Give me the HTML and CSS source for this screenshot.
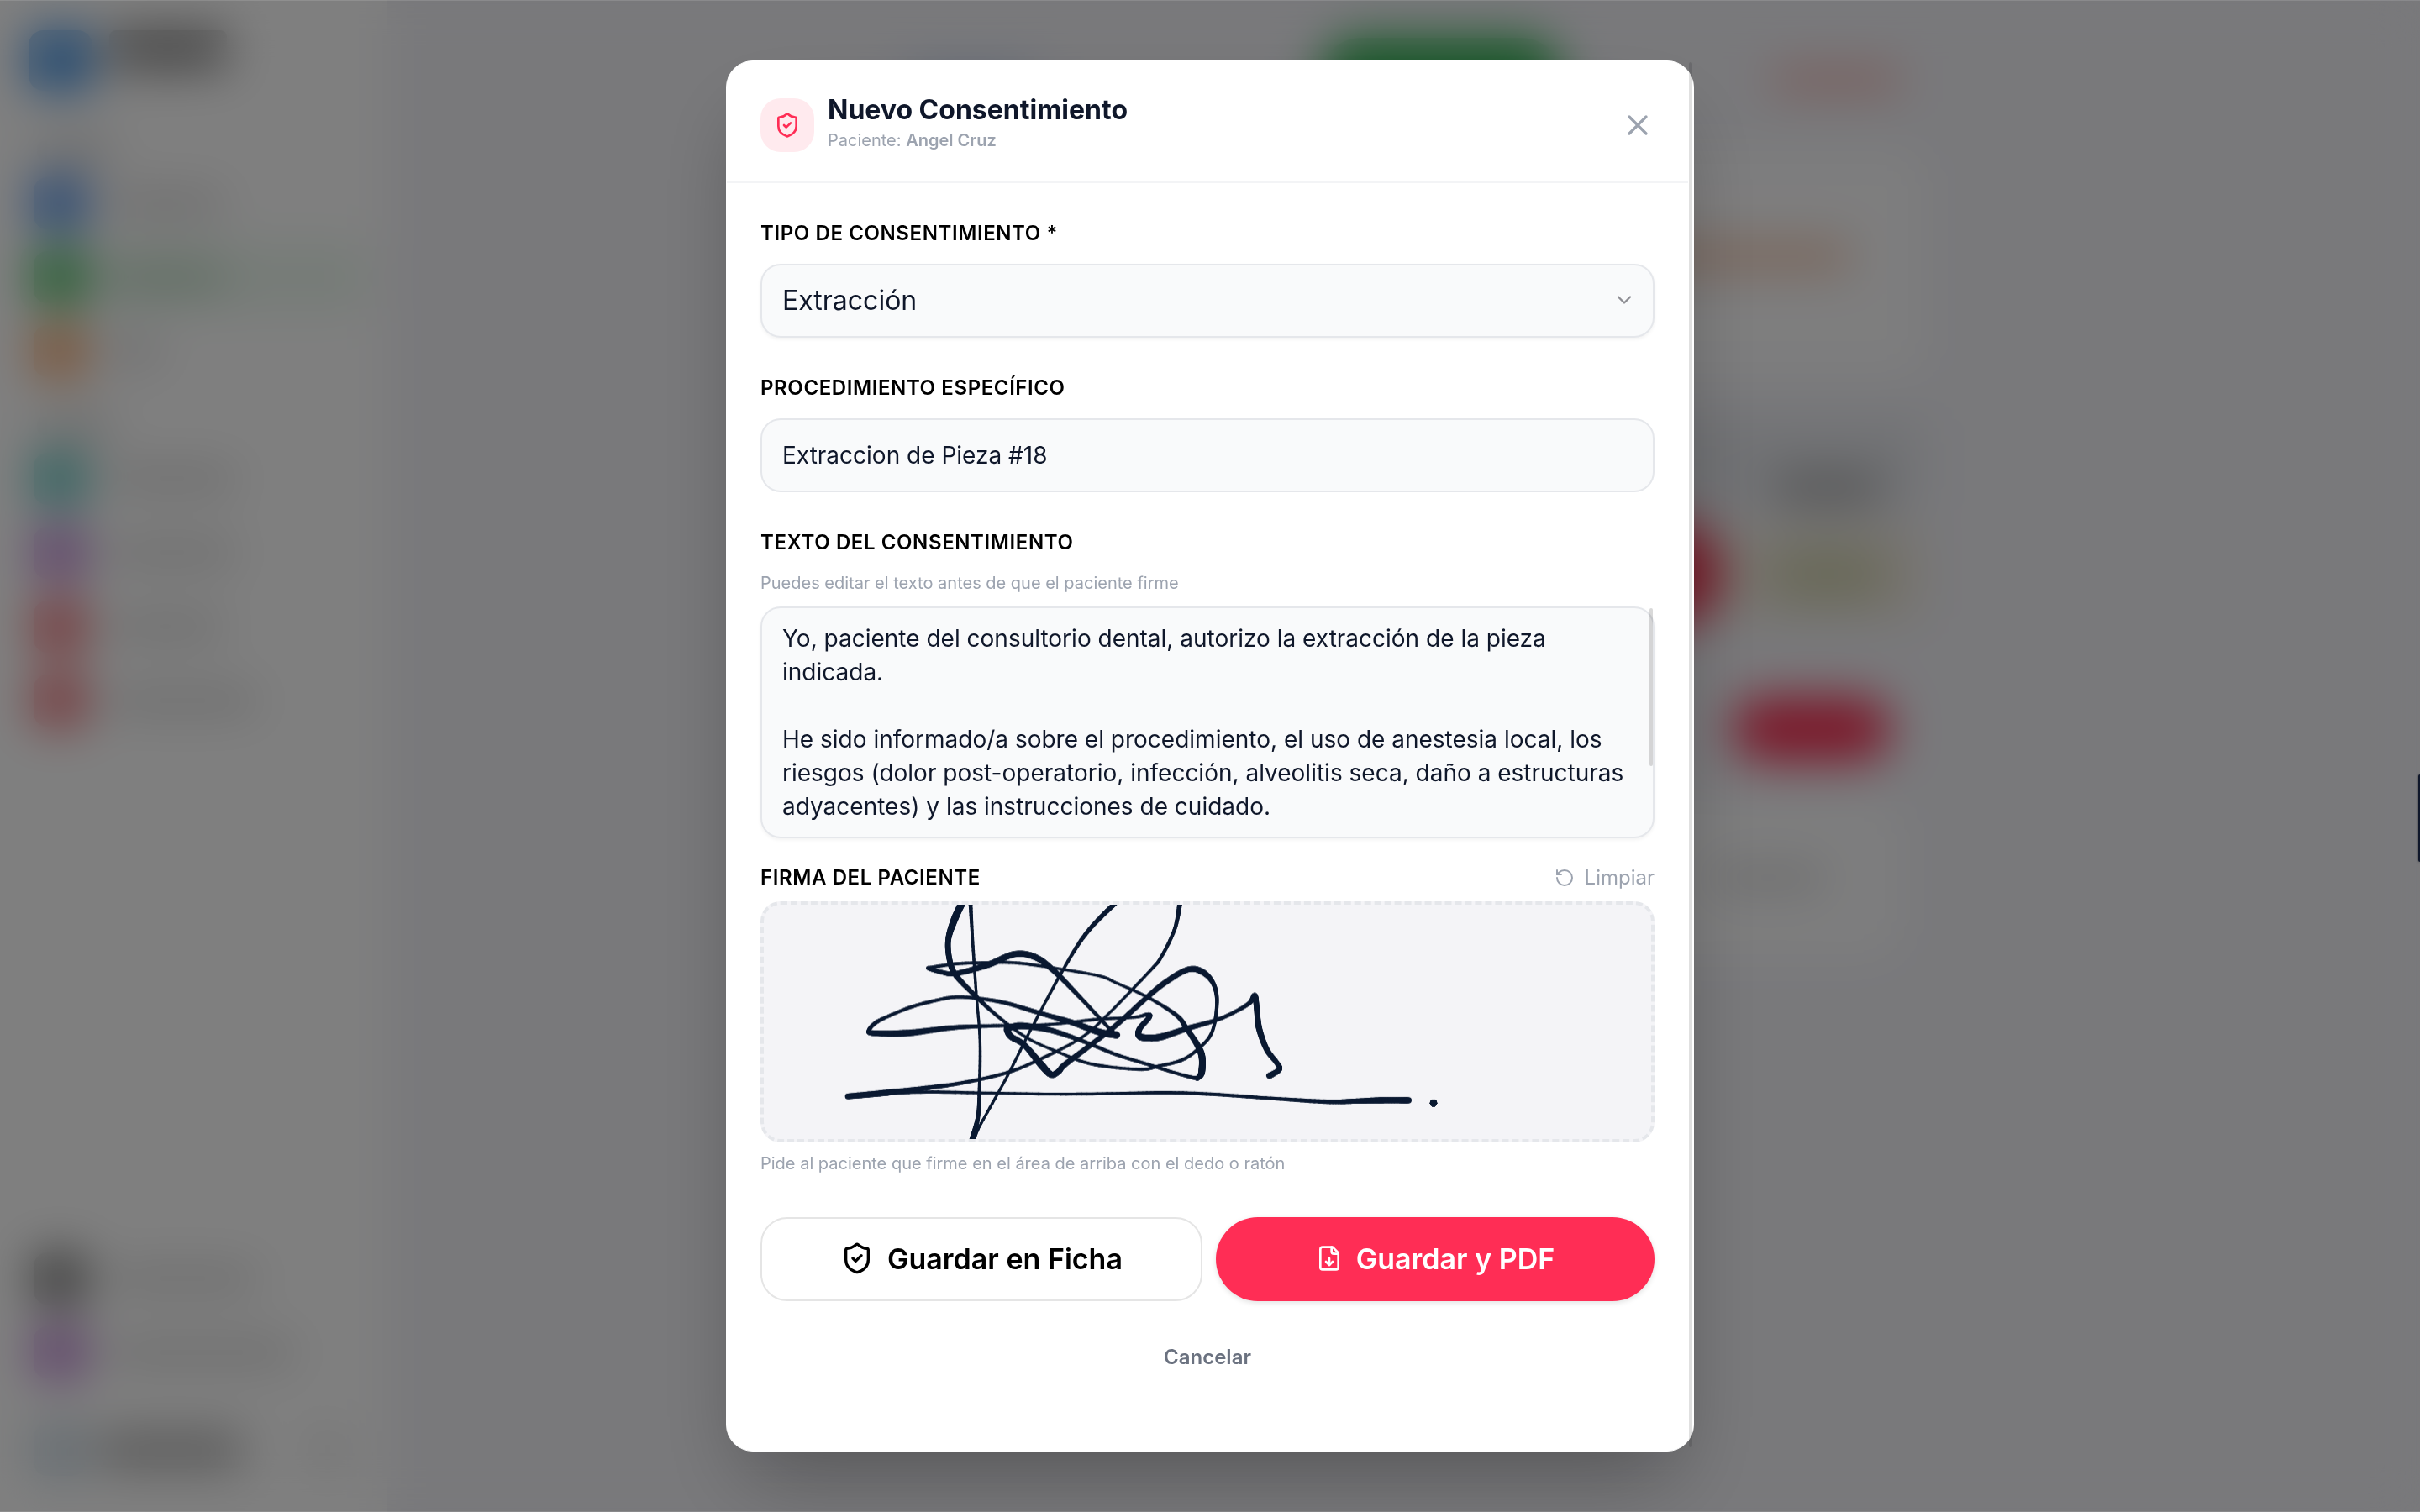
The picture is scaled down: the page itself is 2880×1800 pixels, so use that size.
FILE: index.html
```html
<!DOCTYPE html>
<html lang="es">
<head>
  <meta charset="UTF-8">
  <meta name="viewport" content="width=device-width, initial-scale=1">
  <title>Nuevo Consentimiento</title>
  <link rel="stylesheet" href="styles.css">
</head>
<body>

  <!-- App de fondo -->
  <div class="app" aria-hidden="true">
    <aside class="sidebar">
      <div class="brand"><i class="logo"></i><i class="bar brand-bar"></i></div>
      <i class="bar section-bar"></i>
      <div class="nav-item"><i class="dot blue"></i><i class="bar w-m"></i></div>
      <div class="nav-item active"><i class="dot green"></i><i class="bar w-m"></i></div>
      <div class="nav-item"><i class="dot orange"></i><i class="bar w-s"></i></div>
      <i class="bar section-bar second"></i>
      <div class="nav-item"><i class="dot teal"></i><i class="bar w-l"></i></div>
      <div class="nav-item"><i class="dot purple"></i><i class="bar w-l"></i></div>
      <div class="nav-item"><i class="dot red"></i><i class="bar w-m"></i></div>
      <div class="nav-item"><i class="dot red"></i><i class="bar w-xl"></i></div>
      <div class="sidebar-bottom">
        <div class="nav-item"><i class="dot dark"></i><i class="bar w-xl"></i></div>
        <div class="nav-item"><i class="dot purple"></i><i class="bar w-xxl"></i></div>
        <div class="user"><i class="dot avatar"></i><i class="bar user-bar"></i><i class="user-more"></i></div>
      </div>
    </aside>
    <main class="main">
      <div class="toolbar"><i class="tool-blue"></i><i class="tool-green"></i><i class="tool-red"></i></div>
      <div class="panel"><i class="alert-bar"></i></div>
      <div class="teeth gray"><i class="tooth-label"></i></div>
      <div class="teeth sand"><i class="fab"></i><i class="tooth-label khaki"></i></div>
      <div class="actions"><i class="pill"></i></div>
      <div class="panel low"><i class="bar w-m"></i></div>
    </main>
  </div>

  <div class="overlay">
    <div class="modal" role="dialog" aria-modal="true" aria-labelledby="modal-title">
      <header class="modal-header">
        <div class="header-icon">
          <svg class="icon icon-md" viewBox="0 0 24 24"><path d="M20 13c0 5-3.5 7.5-7.66 8.95a1 1 0 0 1-.67-.01C7.5 20.500 4 18 4 13V6a1 1 0 0 1 1-1c2 0 4.500-1.200 6.240-2.720a1.170 1.170 0 0 1 1.520 0C14.510 3.810 17 5 19 5a1 1 0 0 1 1 1z"/><path d="m9 12 2 2 4-4"/></svg>
        </div>
        <div class="header-text">
          <h1 id="modal-title">Nuevo Consentimiento</h1>
          <p>Paciente: <strong>Angel Cruz</strong></p>
        </div>
        <button type="button" class="close-btn" aria-label="Cerrar">
          <svg class="icon icon-lg" viewBox="0 0 24 24"><path d="M18 6 6 18M6 6l12 12"/></svg>
        </button>
      </header>

      <form class="modal-body">
        <div class="field">
          <label for="tipo">TIPO DE CONSENTIMIENTO *</label>
          <div class="select-wrap">
            <select id="tipo">
              <option>Extracción</option>
            </select>
            <svg class="icon chevron" viewBox="0 0 24 24"><path d="m6 9 6 6 6-6"/></svg>
          </div>
        </div>

        <div class="field">
          <label for="procedimiento">PROCEDIMIENTO ESPECÍFICO</label>
          <input id="procedimiento" type="text" value="Extraccion de Pieza #18">
        </div>

        <div class="field field-text">
          <label for="texto">TEXTO DEL CONSENTIMIENTO</label>
          <p class="hint">Puedes editar el texto antes de que el paciente firme</p>
          <div class="textarea-wrap">
            <textarea id="texto" rows="6">Yo, paciente del consultorio dental, autorizo la extracción de la pieza indicada.

He sido informado/a sobre el procedimiento, el uso de anestesia local, los riesgos (dolor post-operatorio, infección, alveolitis seca, daño a estructuras adyacentes) y las instrucciones de cuidado.</textarea>
            <span class="text-scroll"></span>
          </div>
        </div>

        <div class="sign-head">
          <span class="sign-label">FIRMA DEL PACIENTE</span>
          <button type="button" class="clear-btn" id="limpiar">
            <svg class="icon icon-sm" viewBox="0 0 24 24"><path d="M3 12a9 9 0 1 0 9-9 9.750 9.750 0 0 0-6.740 2.740L3 8"/><path d="M3 3v5h5"/></svg>
            Limpiar
          </button>
        </div>
        <div class="sign-box">
          <canvas id="firma" width="1056" height="278" aria-label="Firma del paciente"></canvas>
        </div>
        <p class="hint sign-hint">Pide al paciente que firme en el área de arriba con el dedo o ratón</p>

        <div class="buttons">
          <button type="button" class="btn btn-outline">
            <svg class="icon icon-lg" viewBox="0 0 24 24"><path d="M20 13c0 5-3.5 7.5-7.66 8.95a1 1 0 0 1-.67-.01C7.5 20.500 4 18 4 13V6a1 1 0 0 1 1-1c2 0 4.500-1.200 6.240-2.720a1.170 1.170 0 0 1 1.520 0C14.510 3.810 17 5 19 5a1 1 0 0 1 1 1z"/><path d="m9 12 2 2 4-4"/></svg>
            Guardar en Ficha
          </button>
          <button type="button" class="btn btn-primary">
            <svg class="icon icon-md" viewBox="0 0 24 24"><path d="M15 2H6a2 2 0 0 0-2 2v16a2 2 0 0 0 2 2h12a2 2 0 0 0 2-2V7Z"/><path d="M14 2v4a2 2 0 0 0 2 2h4"/><path d="M12 18v-6"/><path d="m9 15 3 3 3-3"/></svg>
            Guardar y PDF
          </button>
        </div>
        <button type="button" class="cancel-btn">Cancelar</button>
      </form>
      <span class="modal-scroll"></span>
    </div>
  </div>
  <span class="edge-tab"></span>

  <script src="script.js"></script>
</body>
</html>
```
FILE: styles.css
```css
* {
  box-sizing: border-box;
}

body {
  margin: 0;
  height: 100vh;
  overflow: hidden;
  font-family: Inter, "Liberation Sans", sans-serif;
  color: #0f172a;
  background: #f2f2f7;
}

h1, p {
  margin: 0;
}

button, input, select, textarea {
  font-family: inherit;
}

button {
  border: none;
  background: none;
  padding: 0;
  cursor: pointer;
}

.icon {
  flex: none;
  fill: none;
  stroke: currentColor;
  stroke-width: 2;
  stroke-linecap: round;
  stroke-linejoin: round;
}

.icon-sm { width: 24px; height: 24px; }
.icon-md { width: 32px; height: 32px; }
.icon-lg { width: 40px; height: 40px; }

/* App de fondo */
.app {
  display: flex;
  height: 100vh;
}

.app i {
  display: block;
  flex: none;
}

.sidebar {
  display: flex;
  flex-direction: column;
  width: 460px;
  padding: 36px 24px 34px;
  background: #fff;
}

.brand {
  display: flex;
  gap: 20px;
  height: 126px;
  padding-left: 10px;
}

.logo {
  width: 76px;
  height: 72px;
  border-radius: 18px;
  background: #3f8fe0;
}

.bar {
  width: 140px;
  height: 22px;
  border-radius: 8px;
  background: #ccc;
}

.brand-bar {
  height: 46px;
  background: #888;
}

.section-bar {
  width: 90px;
  margin: 6px 0 12px 20px;
  background: #ccc;
}

.section-bar.second {
  margin: 30px 0 12px 20px;
}

.nav-item {
  display: flex;
  align-items: center;
  gap: 28px;
  height: 80px;
  margin-bottom: 8px;
  padding-left: 16px;
  border-radius: 20px;
}

.nav-item.active {
  background: #ecf8ef;
}

.active .bar { background: #a9cdb0; }

.dot {
  width: 62px;
  height: 62px;
  border-radius: 16px;
}

.blue { background: #4488e4; }
.green { background: #42b85c; }
.orange { background: #f5a468; }
.teal { background: #55c0bb; }
.purple { background: #bc80d4; }
.red { background: #ec6a72; }
.dark { background: #777; }
.avatar { background: #c8d8e4; }

.w-s { width: 60px; }
.w-m { width: 135px; }
.w-l { width: 150px; }
.w-xl { width: 175px; }
.w-xxl { width: 220px; }

.sidebar-bottom {
  margin-top: auto;
}

.user {
  display: flex;
  align-items: center;
  gap: 16px;
  height: 80px;
  margin-top: 36px;
  padding-left: 16px;
}

.user-bar {
  width: 170px;
  height: 44px;
  background: #b4b4b4;
}

.user-more {
  width: 24px;
  height: 24px;
  margin-left: auto;
  margin-right: 34px;
  background: #bbb;
}

.main {
  flex: 1;
  width: 100%;
  max-width: 1240px;
  margin: 0 auto;
  padding-top: 40px;
}

.toolbar {
  display: flex;
  align-items: center;
  height: 110px;
  margin-bottom: 26px;
}

.tool-blue {
  width: 150px;
  height: 24px;
  margin: 0 340px 0 30px;
  background: #b9cdea;
}

.tool-green {
  width: 290px;
  height: 100px;
  border-radius: 50px;
  background: #2fae50;
}

.tool-red {
  width: 150px;
  height: 28px;
  margin: 0 30px 0 auto;
  background: #f5b4ae;
}

.panel {
  display: flex;
  align-items: center;
  justify-content: flex-end;
  height: 274px;
  padding-right: 90px;
  border-radius: 32px;
  background: #fcfcfd;
}

.alert-bar {
  width: 400px;
  height: 30px;
  margin-bottom: 16px;
  background: #f3c0a4;
}

.teeth {
  display: flex;
  justify-content: flex-end;
  align-items: flex-end;
  height: 110px;
  margin-top: 48px;
  padding: 0 50px 8px;
  border-radius: 16px;
  background: #e3e5ea;
}

.tooth-label {
  width: 130px;
  height: 36px;
  border-radius: 16px;
  background: #a8a8a8;
}

.teeth.sand {
  align-items: center;
  gap: 62px;
  margin-top: 20px;
  padding-bottom: 0;
  background: #ede7dc;
}

.fab {
  width: 130px;
  height: 130px;
  border-radius: 50%;
  background: #f0304f;
}

.tooth-label.khaki {
  height: 70px;
  background: #d4d4b4;
}

.actions {
  display: flex;
  justify-content: flex-end;
  height: 120px;
  margin-top: 92px;
  padding-right: 40px;
}

.pill {
  width: 188px;
  height: 76px;
  border-radius: 38px;
  background: #f42c50;
}

.panel.low {
  height: 190px;
  margin-right: 28px;
}

/* Modal */
.overlay {
  position: fixed;
  inset: 0;
  display: flex;
  align-items: center;
  justify-content: center;
  border-top: 1px solid rgba(255, 255, 255, 0.12);
  border-bottom: 1px solid rgba(255, 255, 255, 0.12);
  background: rgba(0, 0, 0, 0.5);
  backdrop-filter: blur(28px);
}

.modal {
  position: relative;
  width: 100%;
  max-width: 1152px;
  max-height: 92vh;
  padding-right: 6px;
  border: 1px solid #fff;
  border-radius: 32px;
  background: #fff;
  box-shadow: 0 50px 100px -24px rgba(0, 0, 0, 0.3);
}

.modal-header {
  display: flex;
  align-items: center;
  gap: 16px;
  padding: 42px 40px 33px;
  border-bottom: 2px solid #f3f4f6;
}

.header-icon {
  display: flex;
  align-items: center;
  justify-content: center;
  width: 64px;
  height: 64px;
  border-radius: 24px;
  background: #ffeaee;
  color: #ff2d55;
}

.header-text {
  flex: 1;
}

.header-text h1 {
  font-size: 32px;
  line-height: 32px;
  font-weight: 700;
}

.header-text p {
  margin-top: 4px;
  font-size: 20px;
  line-height: 32px;
  color: #9ca3af;
}

.header-text strong {
  font-weight: 600;
}

.close-btn {
  display: flex;
  color: #9ca3af;
}

.modal-body {
  padding: 40px 40px 62px;
}

.field {
  margin-bottom: 40px;
}

.field-text {
  margin-bottom: 27px;
}

label, .sign-label {
  display: block;
  font-size: 24px;
  line-height: 40px;
  font-weight: 600;
  letter-spacing: 0.6px;
  color: #000;
}

.field label {
  margin-bottom: 16px;
}

.field-text label {
  margin-bottom: 12px;
}

.hint {
  font-size: 20px;
  line-height: 32px;
  color: #9ca3af;
}

.select-wrap, .textarea-wrap {
  position: relative;
}

input, select, textarea {
  display: block;
  width: 100%;
  height: 88px;
  padding: 0 24px;
  border: 2px solid #e5e7eb;
  border-radius: 24px;
  outline: none;
  background: #f9fafb;
  font-size: 28px;
  color: #0f172a;
}

select {
  appearance: none;
  padding-bottom: 2px;
  font-size: 32px;
  box-shadow: 0 2px 4px rgba(0, 0, 0, 0.05);
}

.chevron {
  position: absolute;
  top: 29px;
  right: 22px;
  width: 28px;
  height: 28px;
  color: #8e8e93;
  pointer-events: none;
}

textarea {
  height: auto;
  padding: 16px 28px 16px 24px;
  line-height: 40px;
  resize: none;
  overflow: hidden;
  box-shadow: 0 2px 4px rgba(0, 0, 0, 0.05);
}

.field-text .hint {
  margin-bottom: 12px;
}

.text-scroll {
  position: absolute;
  top: 2px;
  right: 2px;
  width: 4px;
  height: 188px;
  border-radius: 2px;
  background: rgba(0, 0, 0, 0.15);
}

.sign-head {
  display: flex;
  align-items: center;
  justify-content: space-between;
  margin-bottom: 8px;
}

.clear-btn {
  display: flex;
  align-items: center;
  gap: 12px;
  font-size: 24px;
  line-height: 40px;
  color: #9ca3af;
}

.sign-box {
  height: 287px;
  border: 4px dashed #e5e7eb;
  border-radius: 24px;
  background: #f4f4f7;
  overflow: hidden;
}

.sign-box canvas {
  display: block;
  width: 100%;
  height: 100%;
}

.sign-hint {
  margin: 9px 0 48px;
}

.buttons {
  display: flex;
  gap: 16px;
}

.btn {
  display: flex;
  flex: 1;
  align-items: center;
  justify-content: center;
  gap: 16px;
  height: 100px;
  padding-bottom: 2px;
  font-size: 34px;
  font-weight: 600;
}

.btn-outline {
  border: 2px solid #e5e5e5;
  border-radius: 32px;
  color: #000;
}

.btn-primary {
  border-radius: 50px;
  background: #ff2d55;
  color: #fff;
  box-shadow: 0 2px 6px rgba(0, 0, 0, 0.12);
}

.cancel-btn {
  display: block;
  width: 100%;
  height: 100px;
  margin-top: 16px;
  font-size: 24px;
  font-weight: 600;
  color: #6b7280;
}

.modal-scroll {
  position: absolute;
  top: 1px;
  right: 1px;
  bottom: 4px;
  width: 4px;
  border-radius: 2px;
  background: rgba(0, 0, 0, 0.12);
}

.edge-tab {
  position: fixed;
  top: 922px;
  right: 0;
  width: 2px;
  height: 104px;
  border-radius: 2px 0 0 2px;
  background: #0f172a;
  box-shadow: 0 0 3px rgba(0, 0, 0, 0.5);
}
```
FILE: script.js
```js
const canvas = document.getElementById('firma');
const ctx = canvas.getContext('2d');

// Cada punto: [x, y, grosor]
const strokes = [
  [
    [775, 150, 26], [740, 225, 26], [718, 300, 20], [725, 375, 20], [748, 425, 20], [820, 500, 16], [900, 572, 12],
    [1000, 645, 10], [1110, 695, 10], [1230, 738, 11], [1400, 757, 11], [1470, 745, 11], [1550, 725, 12],
    [1610, 685, 11], [1660, 625, 12], [1678, 520, 13], [1664, 450, 16], [1622, 408, 22], [1570, 403, 20],
    [1490, 450, 20], [1420, 508, 18], [1320, 598, 18], [1230, 668, 18], [1135, 740, 20], [1112, 765, 20], [1085, 775, 22],
    [1050, 740, 26], [990, 670, 20], [942, 640, 22], [928, 617, 22]
  ],
  [
    [928, 612, 22], [980, 602, 24], [1080, 617, 20], [1200, 657, 14], [1320, 705, 12], [1440, 742, 12],
    [1520, 767, 11], [1595, 787, 13], [1612, 785, 18], [1624, 762, 24], [1620, 695, 24], [1570, 612, 18], [1530, 562, 15],
    [1430, 500, 11], [1320, 450, 10], [1260, 425, 10], [1120, 400, 10], [960, 378, 11], [830, 378, 11], [740, 382, 11], [645, 396, 12]
  ],
  [
    [648, 397, 16], [690, 410, 15], [745, 416, 18], [860, 385, 22], [955, 347, 22], [1030, 358, 22], [1100, 410, 20],
    [1200, 512, 14], [1300, 618, 12], [1320, 635, 24]
  ],
  [
    [1318, 636, 22], [1250, 622, 24], [1160, 590, 20], [1040, 555, 16], [920, 520, 14], [820, 504, 12], [740, 500, 12],
    [660, 515, 12], [580, 537, 12], [500, 570, 12], [458, 592, 14], [436, 617, 14], [452, 628, 20], [570, 628, 24], [720, 610, 18],
    [820, 604, 14], [930, 601, 12], [1080, 597, 10], [1250, 579, 11], [1380, 572, 10], [1430, 562, 14], [1436, 572, 18],
    [1402, 612, 20], [1400, 638, 22], [1430, 645, 24], [1480, 641, 24], [1570, 612, 20], [1680, 580, 14], [1750, 548, 13],
    [1795, 520, 15], [1813, 495, 20], [1820, 540, 20], [1828, 610, 22], [1855, 685, 20], [1890, 732, 18], [1901, 757, 18],
    [1865, 780, 22]
  ],
  [
    [797, 150, 15], [805, 290, 11], [818, 480, 10], [832, 660, 10], [829, 850, 12], [824, 930, 15], [803, 1015, 22],
    [830, 960, 10], [930, 780, 10], [1010, 622, 10], [1130, 400, 11], [1215, 268, 15], [1325, 155, 18]
  ],
  [
    [360, 853, 20], [500, 840, 22], [650, 822, 16], [780, 803, 13], [940, 765, 12], [1080, 705, 11], [1200, 640, 10],
    [1290, 560, 10], [1440, 405, 11], [1480, 355, 12], [1528, 255, 13], [1547, 155, 18]
  ],
  [
    [360, 853, 18], [600, 838, 12], [850, 841, 10], [1100, 845, 10], [1320, 843, 11], [1500, 840, 12], [1670, 846, 12],
    [1870, 860, 12], [2070, 872, 16], [2170, 870, 18], [2260, 867, 22], [2362, 867, 22]
  ],
  [
    [2451, 877, 25], [2451, 877, 25]
  ]
];

function spline(a, b, c, d, t) {
  return 0.5 * (2 * b + (c - a) * t + (2 * a - 5 * b + 4 * c - d) * t * t + (3 * b - a - 3 * c + d) * t * t * t);
}

function drawStroke(points) {
  for (let i = 0; i < points.length - 1; i++) {
    const p1 = points[i];
    const p2 = points[i + 1];
    const p0 = points[i - 1] || p1;
    const p3 = points[i + 2] || p2;
    const steps = 12;
    let x = p1[0];
    let y = p1[1];
    for (let s = 1; s <= steps; s++) {
      const t = s / steps;
      const nx = spline(p0[0], p1[0], p2[0], p3[0], t);
      const ny = spline(p0[1], p1[1], p2[1], p3[1], t);
      ctx.lineWidth = p1[2] + (p2[2] - p1[2]) * t;
      ctx.beginPath();
      ctx.moveTo(x, y);
      ctx.lineTo(nx, ny);
      ctx.stroke();
      x = nx;
      y = ny;
    }
  }
}

function clearCanvas() {
  ctx.setTransform(1, 0, 0, 1, 0, 0);
  ctx.clearRect(0, 0, canvas.width, canvas.height);
}

ctx.setTransform(1 / 3, 0, 0, 1 / 3, -20, -57);
ctx.lineCap = 'round';
ctx.strokeStyle = '#0a1931';
strokes.forEach(drawStroke);

document.getElementById('limpiar').addEventListener('click', clearCanvas);
```
